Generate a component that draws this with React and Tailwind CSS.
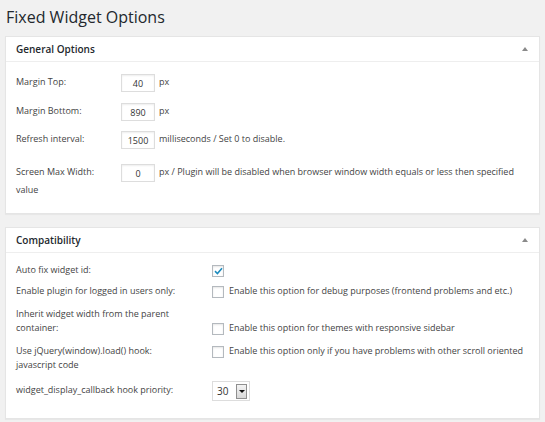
import React from 'react';

const font = { fontFamily: '"Open Sans", "Noto Sans", sans-serif' };

function Panel({ title, children, className = '' }) {
    return (
        <div className={`bg-white border border-[#e5e5e5] shadow-[0_1px_1px_rgba(0,0,0,0.04)] ${className}`}>
            <div className="flex items-center justify-between h-[25px] pl-[10px] pr-[11px] border-b border-[#eeeeee]">
                <span className="text-[10px] font-semibold text-[#23282d]">{title}</span>
                <span className="w-0 h-0 border-l-[3px] border-r-[3px] border-b-[4px] border-l-transparent border-r-transparent border-b-[#8a8a8a]" />
            </div>
            {children}
        </div>
    );
}

function TextBox({ value }) {
    return (
        <input
            readOnly
            value={value}
            className="inline-block w-[34px] h-[18px] align-middle text-center border border-[#dddddd] shadow-[inset_0_1px_2px_rgba(0,0,0,0.07)] text-[9px] text-[#333] outline-none"
        />
    );
}

function Check({ checked }) {
    return (
        <span className="inline-flex items-center justify-center w-[12px] h-[12px] align-middle border border-[#b4b9be] bg-white shadow-[inset_0_1px_2px_rgba(0,0,0,0.1)]">
            {checked && (
                <svg width="9" height="8" viewBox="0 0 9 8">
                    <path d="M1 4.2 L3.4 6.5 L8 1.2" fill="none" stroke="#1e8cbe" strokeWidth="1.6" />
                </svg>
            )}
        </span>
    );
}

export default function App() {
    const generalRows = [
        { label: 'Margin Top:', value: '40', after: 'px', gap: '' },
        { label: 'Margin Bottom:', value: '890', after: 'px', gap: 'mt-[11px]' },
        { label: 'Refresh interval:', value: '1500', after: 'milliseconds / Set 0 to disable.', gap: 'mt-[10px]' },
        { label: 'Screen Max Width:', value: '0', after: 'px / Plugin will be disabled when browser window width equals or less then specified value', gap: 'mt-[15px]' },
    ];

    const compatRows = [
        { label: 'Enable plugin for logged in users only:', text: 'Enable this option for debug purposes (frontend problems and etc.)', gap: 'mt-[7px]' },
        { label: 'Inherit widget width from the parent container:', text: 'Enable this option for themes with responsive sidebar', gap: 'mt-[9px]' },
        { label: 'Use jQuery(window).load() hook:', text: 'Enable this option only if you have problems with other scroll oriented javascript code', gap: 'mt-[9px]' },
    ];

    return (
        <div className="min-h-[422px] bg-[#f1f1f1] px-[5px] pt-[5px] text-[#444]" style={font}>
            <h1 className="text-[16px] leading-[24px] text-[#23282d] pl-[1px] mb-[7px]">Fixed Widget Options</h1>

            <Panel title="General Options">
                <div className="px-[10px] pt-[12px] pb-[15px] text-[9px]">
                    {generalRows.map((row) => (
                        <div key={row.label} className={`leading-[16px] ${row.gap}`}>
                            <span className="inline-block w-[105px]">{row.label}</span>
                            <TextBox value={row.value} />
                            <span className="ml-[4px]">{row.after}</span>
                        </div>
                    ))}
                </div>
            </Panel>

            <Panel title="Compatibility" className="mt-[13px]">
                <div className="px-[10px] pt-[10px] pb-[17px] text-[9px] leading-[14px]">
                    <div>
                        <span className="inline-block w-[196px]">Auto fix widget id:</span>
                        <Check checked />
                    </div>
                    {compatRows.map((row) => (
                        <div key={row.label} className={row.gap}>
                            <span className="inline-block w-[196px] pr-[30px]">{row.label}</span>
                            <Check />
                            <span className="ml-[5px]">{row.text}</span>
                        </div>
                    ))}
                    <div className="mt-[9px]">
                        <span className="inline-block w-[196px]">widget_display_callback hook priority:</span>
                        <span className="inline-flex items-center justify-between w-[38px] h-[20px] align-middle border border-[#dddddd] bg-white pl-[4px] pr-[2px]">
                            <span className="text-[10px] text-[#333]">30</span>
                            <span className="flex items-center justify-center w-[11px] h-[15px] border border-[#8f8f8f] bg-gradient-to-b from-[#f4f4f4] to-[#d8d8d8]">
                                <span className="w-0 h-0 border-l-[3px] border-r-[3px] border-t-[3px] border-l-transparent border-r-transparent border-t-[#111]" />
                            </span>
                        </span>
                    </div>
                </div>
            </Panel>
        </div>
    );
}
